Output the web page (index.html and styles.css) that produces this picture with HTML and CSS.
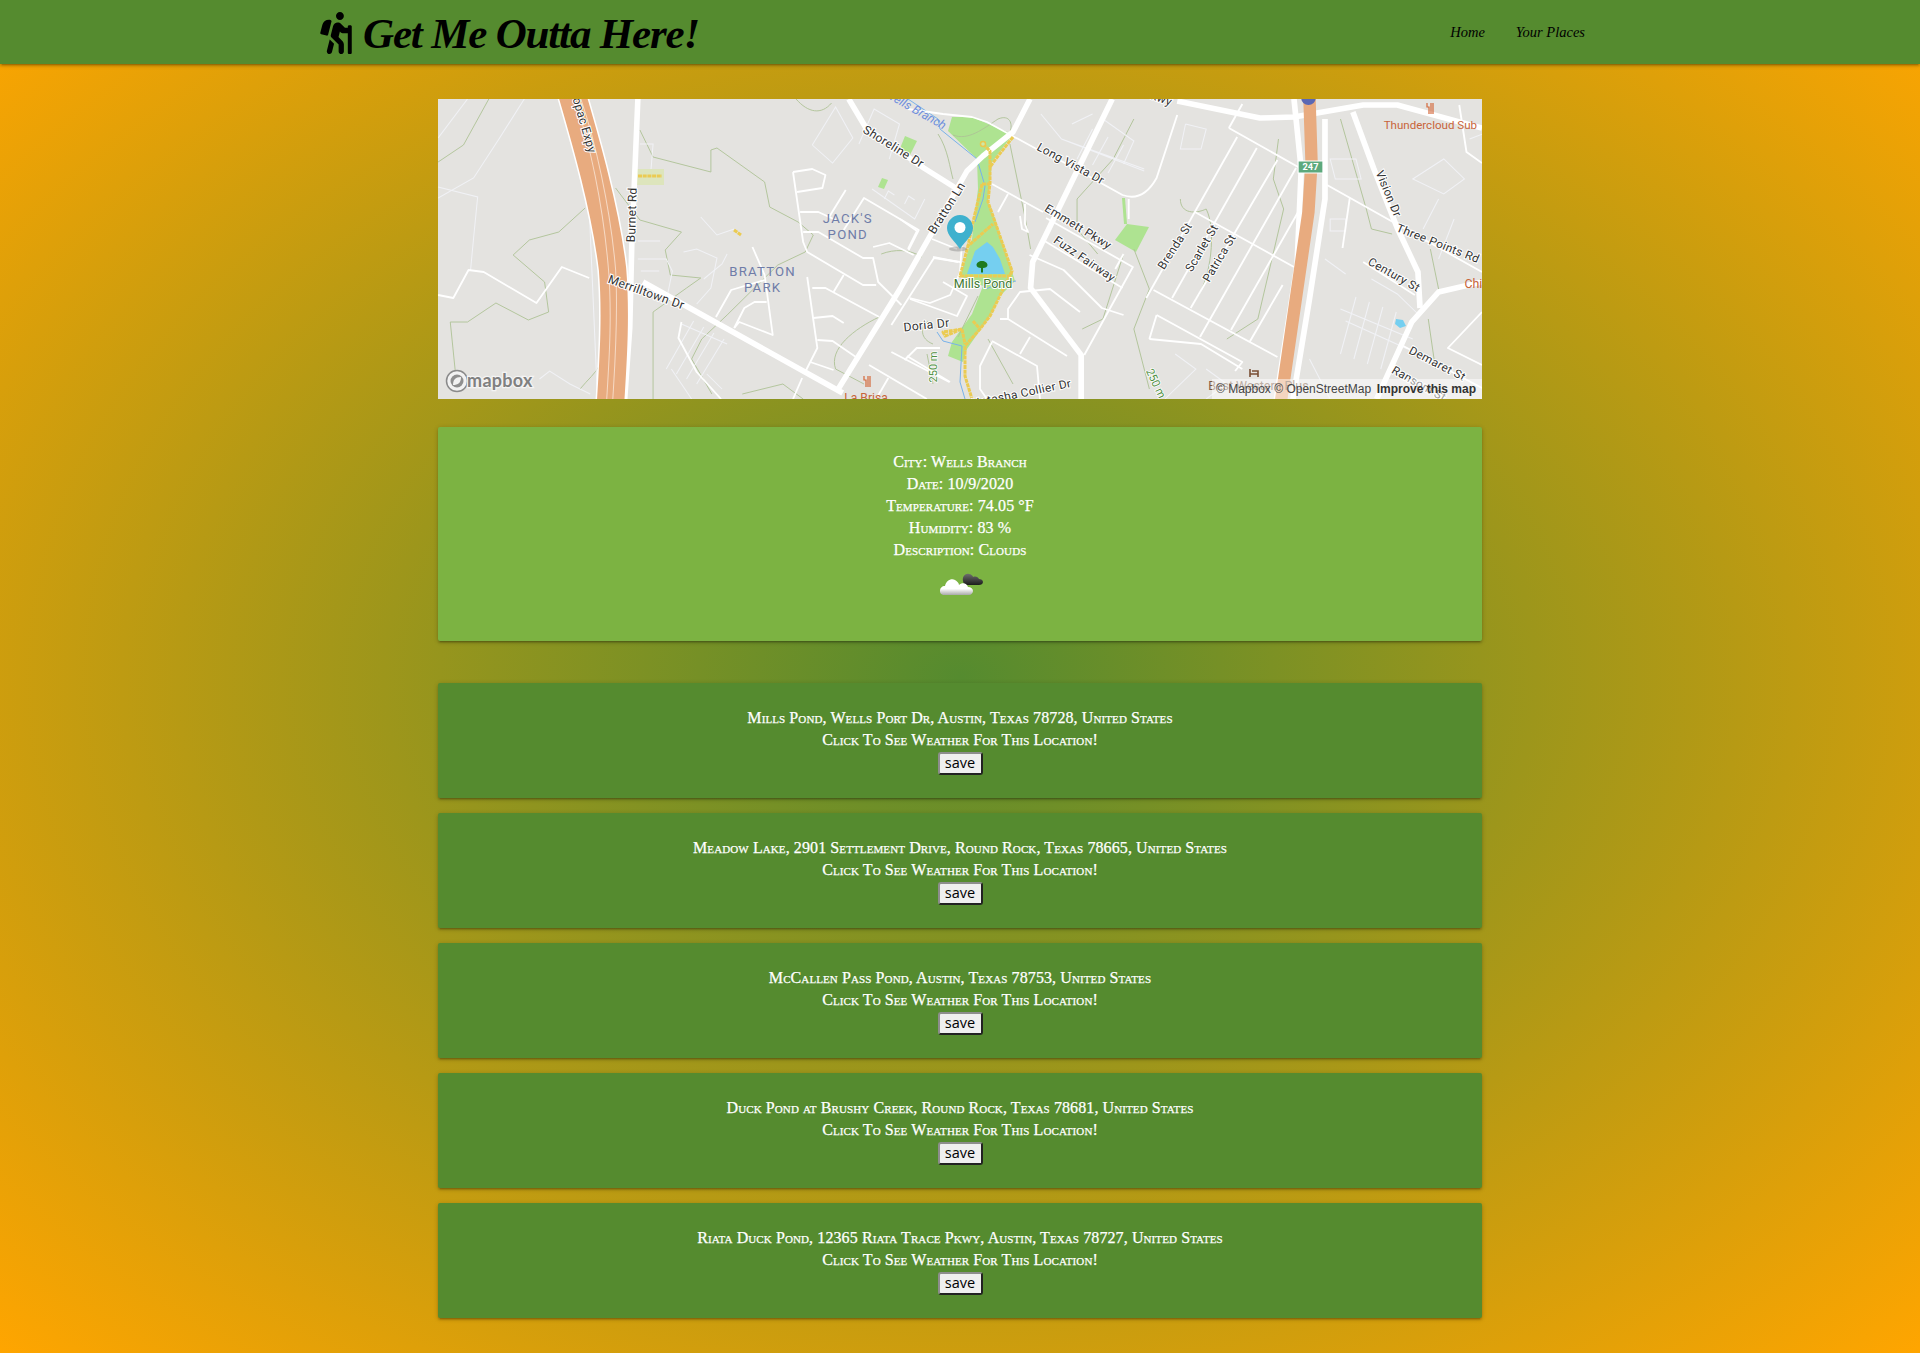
FILE: index.html
```html
<!DOCTYPE html>
<html lang="en">
<head>
<meta charset="utf-8">
<title>Get Me Outta Here!</title>
<link rel="stylesheet" href="styles.css">
</head>
<body>
<header class="topbar">
  <a class="brand" href="#">
    <svg class="hiker" viewBox="0 0 384 512" aria-hidden="true"><path d="M80.95 472.23c-4.28 17.16 6.14 34.53 23.28 38.81 2.61.66 5.22.95 7.8.95 14.33 0 27.37-9.7 31.02-24.23l25.24-100.97-52.78-52.78-34.56 138.22zm14.89-196.12L137 117c2.19-8.42-3.14-16.95-11.92-19.06-43.88-10.52-88.35 15.07-99.32 57.17L.49 253.24c-2.19 8.42 3.14 16.95 11.92 19.06l63.56 15.25c8.79 2.1 17.68-3.02 19.87-11.44zM368 160h-16c-8.84 0-16 7.16-16 16v16h-34.75l-46.78-46.78C243.38 134.11 228.61 128 212.91 128c-27.02 0-50.47 18.3-57.03 44.52l-26.92 107.72a32.012 32.012 0 0 0 8.42 30.39L224 397.25V480c0 17.67 14.33 32 32 32s32-14.33 32-32v-82.75c0-17.09-6.66-33.16-18.75-45.25l-46.78-46.78c.15-.5.43-.97.56-1.48l16.59-66.37 11.03 11.03c6 6 14.14 9.37 22.63 9.37H336v240c0 8.84 7.16 16 16 16h16c8.84 0 16-7.16 16-16V176c0-8.84-7.16-16-16-16zM240 96c26.51 0 48-21.49 48-48S266.51 0 240 0s-48 21.49-48 48 21.49 48 48 48z"/></svg>
    <span class="brand-name">Get Me Outta Here!</span>
  </a>
  <nav class="links">
    <a href="#">Home</a>
    <a href="#">Your Places</a>
  </nav>
</header>

<main class="page">
  <div class="map">
    <svg class="map-svg" viewBox="0 0 1044 300" aria-label="Map of Wells Branch">
      <rect class="land" width="1044" height="300"/>

      <!-- green areas and water -->
      <path class="park" d="M514 18L534 18L562 30L575 35L554 63L552 83L550 103L557 120L577 182L562 197L552 217L529 250L525 263L510 257L514 243L534 215L545 187L522 177L534 140L540 90L539 60L510 32Z"/>
      <path class="park" d="M689 125L711 128L698 153L677 141Z"/>
      <path class="park" d="M684 99h3l2 26h-3Z"/>
      <path class="park" d="M467 37l12 5-7 14-11-4Z"/>
      <path class="park" d="M444 79l6 2-4 9-6-2Z"/>
      <path class="sand" d="M199 70h27v16h-27Z"/>
      <path class="water" d="M529 175L537 152L549 143L555 148L562 160L567 175Z"/>
      <path class="water" d="M958 220l7 1 3 6-6 2-5-4Z"/>

      <!-- lines read from the left part of the map -->
      <g transform="matrix(1.014 0 0 1 .11 0)">
        <g class="contour">
          <path d="M199 31L212 58L269 73L269 51L275 49L322 83L327 108L355 123L370 136L362 153L335 166L285 216L260 240L250 260L270 295"/>
          <path d="M175 89L199 121L240 133L224 151L229 176L259 179L245 189L212 213L212 300"/>
          <path d="M145 109L119 133L90 141L74 156L105 183L109 213L89 221L57 204L29 223L12 223L17 273"/>
          <path d="M50 0L25 46L0 63"/>
          <path d="M353 0C365 14 378 16 388 4"/>
          <path d="M437 155C450 150 465 150 477 158"/>
          <path d="M435 218C410 230 385 250 392 270L420 285"/>
          <path d="M300 295L340 285L360 300"/>
          <path d="M140 290C148 280 155 275 160 265"/>
        </g>
        <g class="service">
          <path d="M0 39L29 0"/>
          <path d="M0 99L35 79L60 40L85 0"/>
          <path d="M0 88L39 98L35 139L32 171"/>
          <path d="M199 45h13l-2 25"/>
          <path d="M149 109L157 296"/>
          <path d="M197 142h22M197 160h28l6 12-6 30M200 172h18"/>
          <path d="M259 118L275 136L292 130M242 153L255 150L275 159L269 189L255 205"/>
          <path d="M262 180L280 165L285 155"/>
          <path d="M369 46L392 8L409 39L389 64L369 46"/>
          <path d="M415 45L430 10L455 25L445 60"/>
          <path d="M428 90L470 120L480 100M460 105l4-8 6 4M440 100l4-8 6 4"/>
          <path d="M252 222L225 270M262 228L235 275M272 234L245 280M282 240L255 285M240 225L285 245"/>
          <path d="M100 280L110 272L130 285L150 295"/>
          <path d="M230 270L250 300M265 275L280 290"/>
        </g>
        <g class="street">
          <path d="M0 196L15 199L30 171L45 173L97 204L122 168L149 179"/>
          <path d="M350 73L369 70L382 76L379 89L354 93"/>
          <path d="M350 73L360 143L364 153L419 186L432 186"/>
          <path d="M357 113L375 113L392 121"/>
          <path d="M402 91L385 119"/>
          <path d="M464 151L474 131L420 99L400 131"/>
          <path d="M360 133L375 133L419 159L429 159L434 183L457 206"/>
          <path d="M429 148L445 144L469 156"/>
          <path d="M400 176L390 193"/>
          <path d="M364 178L374 249L362 273"/>
          <path d="M369 189L382 189L435 218"/>
          <path d="M370 219L389 217L400 224"/>
          <path d="M374 241L389 242L412 258"/>
          <path d="M367 263L390 271"/>
          <path d="M310 148L322 176L330 236L297 223L292 229"/>
          <path d="M324 203L312 203L302 209L292 229"/>
          <path d="M274 218L289 191L322 181"/>
          <path d="M447 226L489 159L515 163"/>
          <path d="M465 199L485 204L505 196L515 173"/>
          <path d="M447 253L504 283"/>
          <path d="M460 261L472 249L495 249"/>
          <path d="M425 266L482 300"/>
          <path d="M444 279L432 300"/>
          <path d="M240 223L237 239L255 273L279 300"/>
          <path d="M359 279L350 300"/>
        </g>
        <g class="road">
          <path d="M197 0L191 146L189 229L184 300"/>
          <path d="M202 183L399 294"/>
          <path d="M405 0L422 29L479 69L512 90"/>
          <path d="M168 180L172 240L168 300"/>
        </g>
        <path class="hwy-casing" d="M132 -5C145 40 165 110 172 170C176 220 172 270 170 305"/>
        <path class="hwy" d="M132 -5C145 40 165 110 172 170C176 220 172 270 170 305"/>
        <path class="hwy-line" d="M132 -5C150 40 163 110 168 170C172 220 168 270 166 305"/>
        <path class="hwy-line" d="M139 -5C155 40 170 110 175 170C178 220 174 270 172 305"/>
      </g>

      <!-- lines read from the right part of the map -->
      <g transform="matrix(1.033 0 0 1 -16.9 0)">
        <g class="contour">
          <path d="M570 45L585 120L590 150"/>
          <path d="M680 155L660 220L640 230"/>
          <path d="M690 150L705 190L690 230L705 290"/>
          <path d="M735 100C735 115 750 115 760 110C770 130 765 180 750 200"/>
          <path d="M830 40L825 80L835 110L810 220L780 240"/>
          <path d="M890 20L915 110L920 130L940 135"/>
          <path d="M977 150L985 190"/>
          <path d="M975 220L982 270"/>
          <path d="M690 20L670 60L635 100L635 130L655 155"/>
        </g>
        <g class="service">
          <path d="M620 40L700 70M600 15L620 40L700 72M630 25L650 15M660 20L690 42L680 65"/>
          <path d="M650 30L635 60M665 38L650 66M680 46L665 74"/>
          <path d="M740 25L760 30L755 50L735 50L740 25"/>
          <path d="M880 60h25l5 20h-25ZM880 120h15v12h-15ZM875 160l20 15"/>
          <path d="M890 210L960 240M895 222L955 250M905 198L890 255M918 203L903 260M931 208L916 265M944 213L929 270"/>
          <path d="M920 180L945 195L965 215M985 100L970 130M1000 120L985 160"/>
          <path d="M960 80L990 60L1010 80L990 95Z"/>
          <path d="M860 260L870 280L880 300M730 255L750 270L720 300M760 270L780 285L760 300"/>
          <path d="M1015 40L1040 30"/>
        </g>
        <g class="street">
          <path d="M605 119L689 168L642 256"/>
          <path d="M604 53L679 96C695 102 705 92 712 79L732 16"/>
          <path d="M602 141L679 189"/>
          <path d="M589 156L622 171L659 209L680 216"/>
          <path d="M790 38L702 199"/>
          <path d="M809 49L727 199"/>
          <path d="M829 61L745 209"/>
          <path d="M847 69L754 238"/>
          <path d="M849 113L784 231"/>
          <path d="M834 186L802 243"/>
          <path d="M782 29L849 68"/>
          <path d="M749 113L845 168"/>
          <path d="M709 191L829 258"/>
          <path d="M712 216L795 263L788 272"/>
          <path d="M705 240L755 245L795 270"/>
          <path d="M712 216L705 240"/>
          <path d="M877 86L1027 173"/>
          <path d="M912 163L962 196"/>
          <path d="M899 99L892 149"/>
          <path d="M949 246L1027 289"/>
          <path d="M1027 213L994 249L1027 266"/>
          <path d="M1005 6L1012 53L1027 64"/>
          <path d="M782 29L795 5"/>
          <path d="M685 100V120M680 155L672 170"/>
        </g>
        <g class="road">
          <path d="M669 0L592 163L590 189L639 256L639 300"/>
          <path d="M732 2L812 19L845 18L912 6L945 6L1027 29"/>
          <path d="M902 13L922 69L945 129L965 173L967 209"/>
          <path d="M925 300L959 223L985 193L1027 183"/>
          <path d="M845 0L852 70L848 166L828 300"/>
          <path d="M875 20L875 100L860 200L844 300"/>
        </g>
        <path class="hwy2" d="M860 0L862 63L859 113L832 305"/>
        <circle class="shield-i" cx="859" cy="-1" r="7"/>
        <rect class="shield" x="849" y="62" width="24" height="12"/>
        <text class="shield-text" x="861" y="71.5">247</text>
      </g>

      <!-- the park in the middle of the map -->
      <g class="stream">
        <path d="M502 30L539 60L547 87L545 100L537 123"/>
        <path d="M499 233L505 242L524 247L522 283L527 300"/>
        <path d="M548 190L560 185L578 182"/>
        <path d="M470 0L500 20L502 30"/>
      </g>
      <g class="contour">
        <path d="M500 35C510 50 512 70 515 80"/>
        <path d="M515 36C530 42 545 30 560 20C572 15 575 25 572 33"/>
        <path d="M490 222C482 228 482 240 495 245"/>
        <path d="M495 285L489 255"/>
        <path d="M540 197L520 238"/>
        <path d="M550 240L575 285"/>
      </g>
      <g class="street">
        <path d="M470 10L505 15L534 18L549 23L604 53"/>
        <path d="M554 85L605 113"/>
        <path d="M570 95L560 113"/>
        <path d="M582 117L584 130L590 133L587 125L587 105"/>
        <path d="M462 120L479 132L470 150"/>
        <path d="M494 140L519 150"/>
        <path d="M495 158L520 163"/>
        <path d="M472 200L519 217L529 197L505 183"/>
        <path d="M524 117L524 143L522 173"/>
        <path d="M469 257L512 283"/>
        <path d="M554 243L542 267L542 290L549 300"/>
        <path d="M554 242L599 267L602 300"/>
        <path d="M592 238L582 255"/>
        <path d="M562 220L570 220L570 210L582 193L612 190L642 213"/>
        <path d="M570 220L629 257"/>
      </g>
      <g class="road">
        <path d="M399 292L462 190L529 72L545 57L575 33L592 0"/>
      </g>
      <g class="trail">
        <path d="M575 38L560 57L552 68L552 83L550 103L555 117L574 172L572 177L522 177L530 147L555 125"/>
        <path d="M545 45L552 52L552 68"/>
        <path d="M544 85L552 85"/>
        <path d="M544 85L535 123L530 147"/>
        <path d="M574 172L552 217L542 230L527 247L527 277L534 300"/>
        <path d="M524 230L505 233L507 237L524 230L527 245"/>
        <path d="M535 222L542 230"/>
        <path d="M200 77H224"/>
        <path d="M296 131l7 5"/>
      </g>
      <circle class="trail-dot" cx="545" cy="45" r="2.5"/>
      <path class="tree" d="M544 162c-3 0-5.500 2-5.500 4s2 3 4.500 3v4.500h2v-4.500c2.500 0 4.500-1 4.500-3s-2.500-4-5.500-4Z"/>
      <ellipse class="pin-shadow" cx="520" cy="150" rx="9" ry="2.500"/>
      <path class="pin" d="M522 150C517 142 509 137 509 129C509 122 515 116 522 116C529 116 535 122 535 129C535 137 527 142 522 150Z"/>
      <circle class="pin-dot" cx="522" cy="128.500" r="5.500"/>

      <!-- places -->
      <path class="poi" d="M426 277v4h2v7M430 277v11M432 277v11"/>
      <path class="poi" d="M989 4v4h2v7M993 4v11M995 4v11"/>
      <path class="hotel" d="M812 270v8M812 275h8v3M814 272h6v3"/>

      <!-- labels -->
      <g transform="matrix(1.014 0 0 1 .11 0)">
        <g class="lbl">
          <text transform="translate(139 22) rotate(74)">Mopac Expy</text>
          <text transform="translate(195 116) rotate(-88)">Burnet Rd</text>
          <text transform="translate(204 197) rotate(20)">Merrilltown Dr</text>
          <text transform="translate(447 51) rotate(32)">Shoreline Dr</text>
          <text transform="translate(505 111) rotate(-58)">Bratton Ln</text>
          <text transform="translate(482 230) rotate(-6)">Doria Dr</text>
        </g>
        <g class="lbl-area">
          <text x="404" y="124">JACK'S</text>
          <text x="404" y="140">POND</text>
          <text x="320" y="177">BRATTON</text>
          <text x="320" y="193">PARK</text>
        </g>
        <text class="lbl-branch" transform="translate(469 14) rotate(30)">Wells Branch</text>
        <text class="lbl-height" transform="translate(492 268) rotate(-90)">250 m</text>
        <text class="lbl-poi" x="422" y="303">La Brisa</text>
      </g>
      <g transform="matrix(1.033 0 0 1 -16.9 0)">
        <g class="lbl lbl-right">
          <text transform="translate(627 68) rotate(29)">Long Vista Dr</text>
          <text transform="translate(634 131) rotate(32)">Emmett Pkwy</text>
          <text transform="translate(640 163) rotate(35)">Fuzz Fairway</text>
          <text transform="translate(733 149) rotate(-58)">Brenda St</text>
          <text transform="translate(759 151) rotate(-60)">Scarlet St</text>
          <text transform="translate(776 161) rotate(-60)">Patrica St</text>
          <text transform="translate(933 96) rotate(68)">Vision Dr</text>
          <text transform="translate(983 148) rotate(22)">Three Points Rd</text>
          <text transform="translate(940 179) rotate(30)">Century St</text>
          <text transform="translate(982 268) rotate(28)">Demaret St</text>
          <text transform="translate(964 288) rotate(30)">Ransom St</text>
          <text transform="translate(582 298) rotate(-12)">Natasha Collier Dr</text>
          <text transform="translate(712 2) rotate(20)">Pkwy</text>
        </g>
        <text class="lbl-height" transform="translate(708 286) rotate(65)">250 m</text>
        <text class="lbl-poi lbl-poi-small" x="977" y="30">Thundercloud Sub</text>
        <text class="lbl-poi-start" x="1010" y="189">Chi</text>
        <text class="lbl-hotel" x="762" y="291">Best Western Plus</text>
      </g>
      <text class="lbl-green" x="545" y="189">Mills Pond</text>

      <!-- mapbox logo -->
      <circle class="logo-ring" cx="19" cy="282" r="10.500"/>
      <circle class="logo-core" cx="19" cy="282" r="6.500"/>
      <path class="logo-mark" d="M15 286c0-5 2-8 8-8 0 6-3 8-8 8Z"/>
      <text class="logo-text" x="29" y="288">mapbox</text>

      <!-- attribution -->
      <rect class="attr-bg" x="774" y="280" width="270" height="20"/>
      <text class="attr" x="778" y="294">© Mapbox © OpenStreetMap</text>
      <text class="attr-bold" x="1038" y="294">Improve this map</text>
    </svg>
  </div>

  <section class="card card-weather">
    <p>City: Wells Branch</p>
    <p>Date: 10/9/2020</p>
    <p>Temperature: 74.05 °F</p>
    <p>Humidity: 83 %</p>
    <p>Description: Clouds</p>
    <svg class="weather-icon" viewBox="-2 -5 50 56" aria-hidden="true">
      <defs>
        <linearGradient id="cw" x1="0" y1="0" x2="0" y2="1"><stop offset="0.6" stop-color="#ffffff"/><stop offset="1" stop-color="#a9a9a9"/></linearGradient>
        <linearGradient id="cd" x1="0" y1="0" x2="0" y2="1"><stop offset="0" stop-color="#6d6d6d"/><stop offset="1" stop-color="#1c1c1c"/></linearGradient>
      </defs>
      <path fill="url(#cd)" d="M26 15c-1-5 3-8 6-7 2 0 4 2 4 3 3-1 5 0 6 2 2 0 4 1 4 3s-2 3-4 3H30c-2 0-4-2-4-4Z"/>
      <path fill="url(#cw)" d="M8 29c-4 0-5-2-5-4 0-3 2-5 5-5 1-5 6-8 10-6 2 1 4 3 4 5 3-3 8-2 9 2 3 0 5 2 5 4s-2 4-4 4Z"/>
    </svg>
  </section>

  <div class="results">
    <section class="card">
      <p>Mills Pond, Wells Port Dr, Austin, Texas 78728, United States</p>
      <p>Click To See Weather For This Location!</p>
      <button class="save" type="button">save</button>
    </section>
    <section class="card">
      <p>Meadow Lake, 2901 Settlement Drive, Round Rock, Texas 78665, United States</p>
      <p>Click To See Weather For This Location!</p>
      <button class="save" type="button">save</button>
    </section>
    <section class="card">
      <p>McCallen Pass Pond, Austin, Texas 78753, United States</p>
      <p>Click To See Weather For This Location!</p>
      <button class="save" type="button">save</button>
    </section>
    <section class="card">
      <p>Duck Pond at Brushy Creek, Round Rock, Texas 78681, United States</p>
      <p>Click To See Weather For This Location!</p>
      <button class="save" type="button">save</button>
    </section>
    <section class="card">
      <p>Riata Duck Pond, 12365 Riata Trace Pkwy, Austin, Texas 78727, United States</p>
      <p>Click To See Weather For This Location!</p>
      <button class="save" type="button">save</button>
    </section>
  </div>
</main>
</body>
</html>
```

FILE: styles.css
```css
* { box-sizing: border-box; }

html, body { height: 100%; }

body {
  margin: 0;
  min-height: 1353px;
  background: radial-gradient(#558b2f, #ffa500);
  font-family: "Liberation Serif", serif;
  overflow: hidden;
}

.topbar {
  height: 64px;
  background: #558b2f;
  box-shadow: 0 2px 2px 0 rgba(0,0,0,.14), 0 3px 1px -2px rgba(0,0,0,.12), 0 1px 5px 0 rgba(0,0,0,.2);
  display: flex;
  align-items: center;
  justify-content: space-between;
  padding: 0 320px;
}

.brand {
  display: flex;
  align-items: center;
  gap: 11px;
  color: #000;
  text-decoration: none;
}

.hiker {
  width: 32px;
  height: 42px;
  fill: #000;
  margin-top: 2px;
}

.brand-name {
  font-size: 43px;
  font-style: italic;
  font-weight: 700;
  line-height: 64px;
  letter-spacing: -1.17px;
  padding-top: 4px;
}

.links {
  display: flex;
  gap: 31px;
  padding-right: 15px;
}

.links a {
  color: #000;
  font-size: 14.5px;
  font-style: italic;
  text-decoration: none;
}

.page {
  width: 1044px;
  margin: 35px auto 0;
}

.map { height: 300px; overflow: hidden; }
.map-svg { display: block; width: 1044px; height: 300px; }

.card {
  background: #558b2f;
  color: #fff;
  padding: 24px;
  text-align: center;
  border-radius: 2px;
  box-shadow: 0 2px 2px 0 rgba(0,0,0,.14), 0 3px 1px -2px rgba(0,0,0,.12), 0 1px 5px 0 rgba(0,0,0,.2);
  font-size: 16px;
  font-variant: small-caps;
  letter-spacing: .1px;
  line-height: 22px;
  -webkit-text-stroke: .25px #fff;
}

.card p { margin: 0; }

.card-weather {
  background: #7cb342;
  margin-top: 28px;
  height: 214px;
}

.weather-icon {
  display: block;
  width: 50px;
  height: 56px;
  margin: 0 auto;
}

.results {
  margin-top: 42px;
  display: flex;
  flex-direction: column;
  gap: 15px;
}

.results .card { height: 115px; }

.save {
  display: block;
  width: 45px;
  height: 23px;
  margin: 1px auto 0;
  padding: 0;
  font: 14.5px/1 "Open Sans", sans-serif;
  font-variant: normal;
  letter-spacing: 0;
  -webkit-text-stroke: 0;
  color: #000;
  background: #efefef;
  border: 2px solid #000;
  border-color: #8d8d8d #222 #222 #8d8d8d;
  border-radius: 3px;
}

/* map */
.land { fill: #e4e3e0; }
.park { fill: #aee391; }
.sand { fill: #dde5bc; }
.water { fill: #75cff0; }
.stream path { fill: none; stroke: #78b2ea; stroke-width: 1; }
.contour path { fill: none; stroke: #aec296; stroke-width: .9; }
.service path { fill: none; stroke: #f1f2f6; stroke-width: 1; }
.street path { fill: none; stroke: #fff; stroke-width: 1.8; stroke-linejoin: round; }
.road path { fill: none; stroke: #fff; stroke-width: 5.5; stroke-linejoin: round; }
.hwy-casing { fill: none; stroke: #fff; stroke-width: 30; }
.hwy { fill: none; stroke: #e8ab7f; stroke-width: 27; }
.hwy-line { fill: none; stroke: #f6d9c4; stroke-width: 1; }
.hwy2 { fill: none; stroke: #e8ab7f; stroke-width: 12; }
.trail path { fill: none; stroke: #ebcb52; stroke-width: 3; stroke-dasharray: 4 .7; stroke-linejoin: round; }
.trail-dot { fill: #cde8a8; stroke: #e9c84e; stroke-width: 1.5; }
.shield-i { fill: #5a68b4; }
.shield { fill: #5da97d; stroke: #fff; stroke-width: 1; }
.shield-text { fill: #fff; font: 700 9px "Roboto", sans-serif; text-anchor: middle; }
.tree { fill: #1f7a1f; }
.pin-shadow { fill: rgba(90,90,90,.3); }
.pin { fill: #3fb1ce; }
.pin-dot { fill: #fff; }
.poi { fill: none; stroke: #d4683a; stroke-width: 1.2; }
.hotel { fill: none; stroke: #7a4f35; stroke-width: 1.6; }

.lbl text {
  font: 12px "Roboto", sans-serif;
  fill: #333;
  stroke: #fff;
  stroke-width: 2px;
  paint-order: stroke;
  text-anchor: middle;
  letter-spacing: .3px;
}
.lbl-right text { font-size: 11.5px; }
.lbl-area text {
  font: 13px "Roboto", sans-serif;
  fill: #6f7ca8;
  text-anchor: middle;
  letter-spacing: 1.2px;
}
.lbl-branch { font: italic 12px "Roboto", sans-serif; fill: #6d8ddd; text-anchor: middle; }
.lbl-green { font: 12.5px "Roboto", sans-serif; fill: #3f7a34; stroke: #fff; stroke-width: 2px; paint-order: stroke; text-anchor: middle; }
.lbl-height { font: 11px "Roboto", sans-serif; fill: #4f8f3f; stroke: #fff; stroke-width: 1.5px; paint-order: stroke; text-anchor: middle; }
.lbl-poi { font: 12px "Roboto", sans-serif; fill: #c8643a; text-anchor: middle; }
.lbl-poi-small { font-size: 11.2px; }
.lbl-poi-start { font: 12px "Roboto", sans-serif; fill: #c8643a; }
.lbl-hotel { font: 12px "Roboto", sans-serif; fill: #7a5a45; }

.logo-ring { fill: #f2f2f2; stroke: #8a8a8a; stroke-width: 1.5; }
.logo-core { fill: #8f8f8f; }
.logo-mark { fill: #f2f2f2; }
.logo-text {
  font: 700 18px "Lato", sans-serif;
  fill: #808080;
  stroke: #f4f4f4;
  stroke-width: 2.5px;
  paint-order: stroke;
  letter-spacing: .3px;
}

.attr-bg { fill: rgba(255,255,255,.5); }
.attr { font: 12px "Liberation Sans", sans-serif; fill: #444; }
.attr-bold { font: 700 12px "Liberation Sans", sans-serif; fill: #333; text-anchor: end; }
```
